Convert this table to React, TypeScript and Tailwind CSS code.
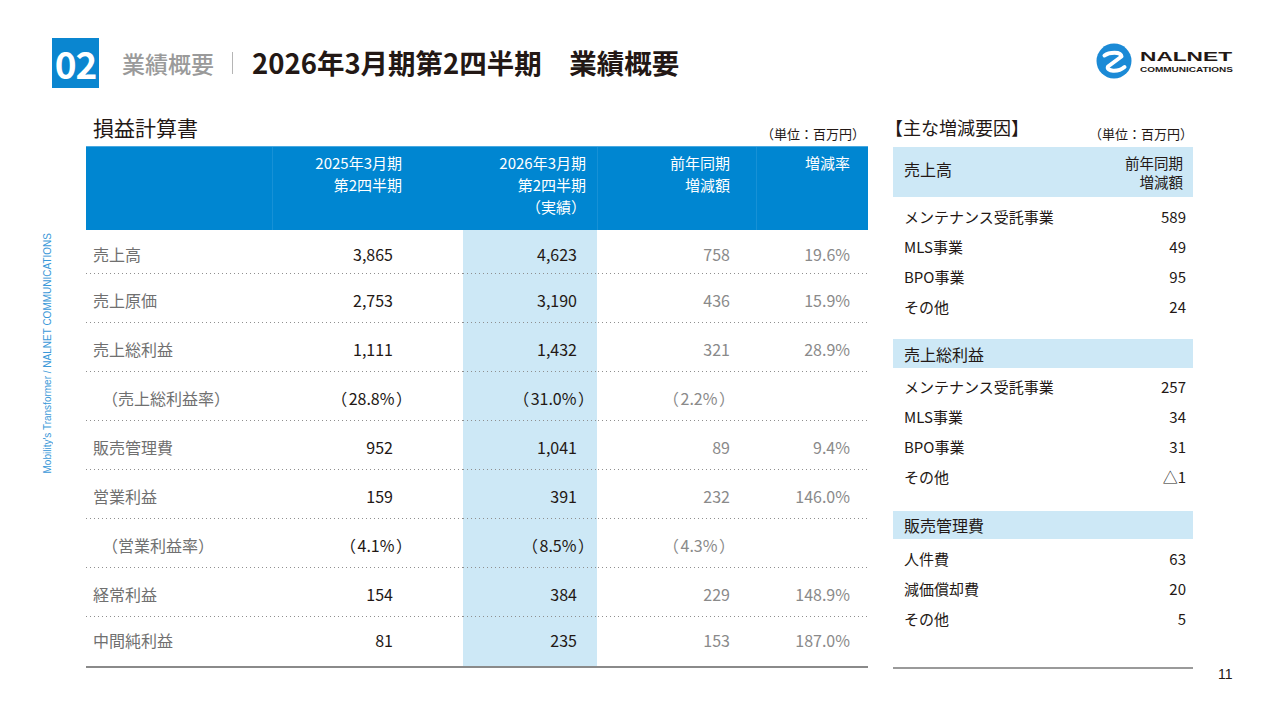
import React from 'react';

const rows = [
  { label: '売上高', a: '3,865', b: '4,623', c: '758', d: '19.6%' },
  { label: '売上原価', a: '2,753', b: '3,190', c: '436', d: '15.9%' },
  { label: '売上総利益', a: '1,111', b: '1,432', c: '321', d: '28.9%' },
  { label: '（売上総利益率）', a: '28.8%', b: '31.0%', c: '2.2%', d: '', ratio: true },
  { label: '販売管理費', a: '952', b: '1,041', c: '89', d: '9.4%' },
  { label: '営業利益', a: '159', b: '391', c: '232', d: '146.0%' },
  { label: '（営業利益率）', a: '4.1%', b: '8.5%', c: '4.3%', d: '', ratio: true },
  { label: '経常利益', a: '154', b: '384', c: '229', d: '148.9%' },
  { label: '中間純利益', a: '81', b: '235', c: '153', d: '187.0%' },
];

const factors = [
  {
    title: '売上高',
    head: true,
    items: [
      ['メンテナンス受託事業', '589'],
      ['MLS事業', '49'],
      ['BPO事業', '95'],
      ['その他', '24'],
    ],
  },
  {
    title: '売上総利益',
    items: [
      ['メンテナンス受託事業', '257'],
      ['MLS事業', '34'],
      ['BPO事業', '31'],
      ['その他', '△1'],
    ],
  },
  {
    title: '販売管理費',
    items: [
      ['人件費', '63'],
      ['減価償却費', '20'],
      ['その他', '5'],
    ],
  },
];

const cols = 'grid grid-cols-[186px_191px_134px_159px_112px]';
const dots =
  'bg-[image:repeating-linear-gradient(to_right,#8f8f8f_0_1px,transparent_1px_4px)] bg-[length:100%_1px] bg-bottom bg-no-repeat';

// value in full-width parens, e.g. （28.8%）
function Ratio({ v }: { v: string }) {
  return (
    <span>
      （<span className="px-[1.5px]">{v}</span>）
    </span>
  );
}

function Logo() {
  return (
    <div className="flex items-center gap-[8px]">
      <svg width="36" height="36" viewBox="0 0 36 36">
        <circle cx="18" cy="18" r="17.5" fill="#1b8ad6" />
        <path
          d="M8.5 12.5 C13 9 25 8 25.5 13.5 L12 23.5 C10 28.5 22 29.5 28.5 24"
          fill="none"
          stroke="#fff"
          strokeWidth="4"
          strokeLinecap="round"
          strokeLinejoin="round"
        />
      </svg>
      <svg width="96" height="30" viewBox="0 0 96 30">
        <text
          x="0"
          y="14.5"
          textLength="92"
          lengthAdjust="spacingAndGlyphs"
          fontFamily="'Liberation Sans', sans-serif"
          fontSize="12"
          fontWeight="700"
          fill="#231815"
        >
          NALNET
        </text>
        <text
          x="0"
          y="26"
          textLength="93"
          lengthAdjust="spacingAndGlyphs"
          fontFamily="'Liberation Sans', sans-serif"
          fontSize="7"
          fontWeight="700"
          fill="#231815"
        >
          COMMUNICATIONS
        </text>
      </svg>
    </div>
  );
}

export default function App() {
  return (
    <div className="w-[1280px] h-[721px] bg-white overflow-hidden font-['Noto_Sans_CJK_JP','Noto_Sans',sans-serif] text-[#231815]">
      {/* header */}
      <div className="flex items-center justify-between pl-[52px] pr-[44px] mt-[38px] h-[50px]">
        <div className="flex items-center h-[50px]">
          <div className="w-[47px] h-[50px] bg-[#0a86d0] flex items-center justify-center text-white text-[37px] font-bold tracking-[-1px] leading-none">
            02
          </div>
          <div className="ml-[23px] text-[23px] font-medium text-[#9a9a9a] leading-none">業績概要</div>
          <div className="ml-[18px] w-px h-[22px] bg-[#b5b5b5]" />
          <div className="ml-[19px] text-[27.5px] font-bold leading-none">2026年3月期第2四半期　業績概要</div>
        </div>
        <div className="-mt-[4px]">
          <Logo />
        </div>
      </div>

      <div className="flex mt-[20px]">
        {/* side caption */}
        <div className="w-[86px] flex items-start justify-center pt-[125px] pl-[10px]">
          <div className="[writing-mode:vertical-rl] rotate-180 font-['Liberation_Sans',sans-serif] text-[10px] text-[#3a98d8] leading-none whitespace-nowrap">
            Mobility's Transformer / NALNET COMMUNICATIONS
          </div>
        </div>

        {/* income statement */}
        <div className="w-[782px]">
          <div className="flex items-end justify-between h-[38px]">
            <div className="pl-[7px] text-[21px] leading-[38px]">損益計算書</div>
            <div className="pb-[6px] pr-[3px] text-[13px] leading-none">（単位：百万円）</div>
          </div>
          <div className={`${cols} h-[84px] bg-[#0086d1] text-white text-[15px] leading-[22px] text-right border-t border-[#4aa9e0]`}>
            <div />
            <div className="border-l border-[#1791d6] pt-[5px] pr-[61px]">
              2025年3月期
              <br />
              第2四半期
            </div>
            <div className="pt-[5px] pr-[11px]">
              2026年3月期
              <br />
              第2四半期
              <br />
              （実績）
            </div>
            <div className="border-l border-[#1791d6] pt-[5px] pr-[26px]">
              前年同期
              <br />
              増減額
            </div>
            <div className="border-l border-[#1791d6] pt-[5px] pr-[18px]">増減率</div>
          </div>
          <div className="border-b-2 border-[#8a8a8a]">
            {rows.map((r, i) => {
              const last = i === rows.length - 1;
              const h = i === 0 ? 'h-[44px]' : 'h-[49px]';
              const pad = last ? 'pb-[3px]' : 'pt-[3px]';
              return (
                <div key={i} className={`${cols} ${h} ${last ? '' : dots} text-[16px] text-right`}>
                  <div className={`flex items-center ${pad} ${r.ratio ? 'pl-[16px]' : 'pl-[7px]'} text-left text-[#707070]`}>
                    {r.label}
                  </div>
                  <div className={`flex items-center justify-end ${pad} ${r.ratio ? 'pr-[51px]' : 'pr-[70px]'}`}>
                    {r.ratio ? <Ratio v={r.a} /> : r.a}
                  </div>
                  <div
                    className={`flex items-center justify-end bg-[#cde8f6] ${pad} ${last ? '' : dots} ${
                      r.ratio ? 'pr-[3px]' : 'pr-[20px]'
                    }`}
                  >
                    {r.ratio ? <Ratio v={r.b} /> : r.b}
                  </div>
                  <div className={`flex items-center justify-end ${pad} ${r.ratio ? 'pr-[21px]' : 'pr-[26px]'} text-[#8a8a8a]`}>
                    {r.ratio ? <Ratio v={r.c} /> : r.c}
                  </div>
                  <div className={`flex items-center justify-end ${pad} pr-[18px] text-[#8a8a8a]`}>{r.d}</div>
                </div>
              );
            })}
          </div>
        </div>

        {/* main factors */}
        <div className="ml-[25px] w-[345px]">
          <div className="w-[300px] flex items-end justify-between h-[38px]">
            <div className="-ml-[8px] text-[18px] leading-[38px]">【主な増減要因】</div>
            <div className="pb-[6px] text-[13px] leading-none">（単位：百万円）</div>
          </div>
          {factors.map((f, i) => (
            <div key={i} className={i === 0 ? 'mt-[1px]' : i === 1 ? 'mt-[17px]' : 'mt-[19px]'}>
              {f.head ? (
                <div className="w-[300px] h-[50px] bg-[#cde8f6] flex items-center justify-between pl-[11px] pr-[10px]">
                  <div className="text-[16px] -mt-[6px]">{f.title}</div>
                  <div className="text-[14.5px] leading-[19px] text-right">
                    前年同期
                    <br />
                    増減額
                  </div>
                </div>
              ) : (
                <div className={`w-[300px] ${i === 1 ? 'h-[29px]' : 'h-[28px]'} bg-[#cde8f6] flex items-center pl-[11px] text-[16px]`}>
                  {f.title}
                </div>
              )}
              <div className={`w-[300px] ${i === 1 ? 'mt-[4px]' : 'mt-[5px]'}`}>
                {f.items.map(([k, v], j) => (
                  <div key={j} className="flex items-center justify-between h-[30px] pl-[11px] pr-[7px] text-[15px]">
                    <span>{k}</span>
                    <span>{v}</span>
                  </div>
                ))}
              </div>
            </div>
          ))}
          <div className="flex items-start mt-[33px]">
            <div className="w-[300px] h-[2px] bg-[#9a9a9a]" />
            <div className="ml-[25px] font-['Liberation_Sans',sans-serif] text-[14px] leading-none">11</div>
          </div>
        </div>
      </div>
    </div>
  );
}
